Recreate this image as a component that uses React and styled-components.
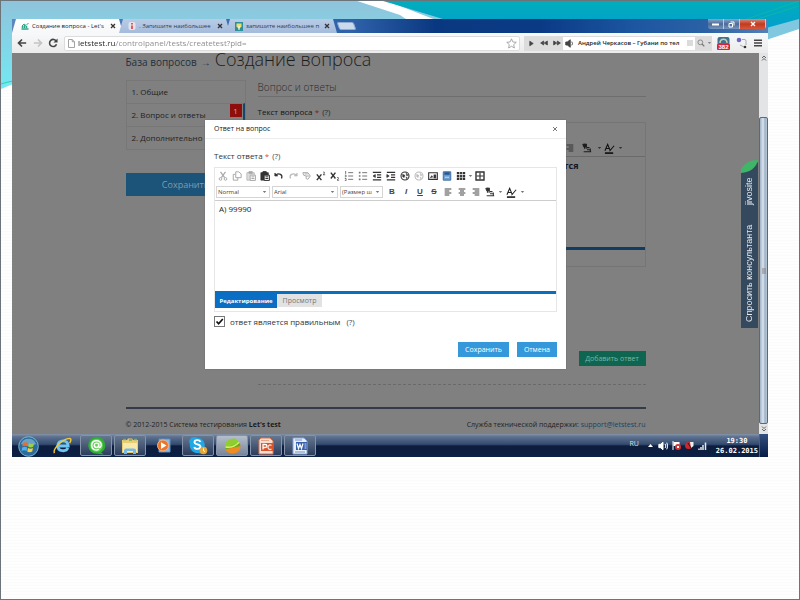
import React, { useState } from "react";
import styled, { createGlobalStyle, css } from "styled-components";

const Global = createGlobalStyle`
  * { box-sizing: border-box; }
  body { margin: 0; font-family: "Open Sans", sans-serif; font-size: 8px; color: #333; }
  button, input, select, textarea { font-family: inherit; margin: 0; }
  button { border: 0; padding: 0; background: none; color: inherit; cursor: pointer; }
  svg { display: block; flex: none; }
  a { text-decoration: none; }
`;

/* ---------- slide ---------- */
const Slide = styled.div`
  position: relative;
  min-height: 100vh;
  padding: 18px 31px 24px 11px;
  border: 1px solid #6b7478;
  overflow: hidden;
  background: repeating-linear-gradient(#fefefe 0 2px, #fbfbfb 2px 3px);
`;
const Waves = styled.svg`
  position: absolute;
  top: 0;
  left: 0;
  width: 100%;
  height: 100px;
`;
const Window = styled.section`
  position: relative;
  display: flex;
  flex-direction: column;
`;

/* ---------- browser chrome ---------- */
const TabStrip = styled.div`
  display: flex;
  height: 14px;
  background: linear-gradient(90deg, #5b86bf 0, #2e62a9 45%, #0a3880 56%, #0b3a85 70%, #1c56a0 82%, #2b62a6 92%, #567fb5);
`;
const Tab = styled.div`
  display: flex;
  align-items: center;
  gap: 3px;
  width: 111px;
  margin-right: -4px;
  padding: 0 7px 0 9px;
  font-size: 6px;
  font-weight: 500;
  line-height: 14px;
  color: ${(p) => (p.$active ? "#222" : "#2e3d55")};
  background: ${(p) => (p.$active ? "linear-gradient(#fff, #f6f7f8)" : "linear-gradient(#b9cce6, #a3bbdc)")};
  clip-path: polygon(4px 0, 107px 0, 100% 100%, 0 100%);
`;
const TabTitle = styled.span`
  flex: 1;
  white-space: nowrap;
`;
const IconButton = styled.button`
  display: grid;
  place-items: center;
  width: ${(p) => p.$w || 14}px;
  height: ${(p) => p.$h || 14}px;
  flex: none;
  color: ${(p) => p.$color || "#444"};
`;
const NewTab = styled.button`
  width: 17px;
  height: 8px;
  margin: 3px 0 0 5px;
  background: #cbd9ec;
  border: 1px solid #8eabd2;
  border-radius: 2px;
  transform: skewX(20deg);
`;
const Caption = styled.div`
  display: flex;
  align-self: flex-start;
  margin: 0 2px 0 auto;
  border-radius: 0 0 3px 3px;
  overflow: hidden;
`;
const CaptionButton = styled.button`
  display: grid;
  place-items: center;
  width: ${(p) => (p.$close ? 26 : 16)}px;
  height: 10px;
  border-right: 1px solid #b9c9df;
  background: ${(p) =>
    p.$close ? "linear-gradient(#dc8a7c, #c23a20 50%, #d4573c)" : "linear-gradient(#8aa4c6, #4b6c9b 50%, #7795bb)"};
`;
const Toolbar = styled.div`
  display: flex;
  align-items: center;
  height: 20px;
  padding: 0 0 0 2px;
  background: linear-gradient(#f8f9fa, #ebebec);
`;
const Omnibox = styled.label`
  display: flex;
  flex: 1;
  align-items: center;
  height: 15px;
  margin: 0 4px 0 3px;
  padding: 0 2px 0 2px;
  gap: 2px;
  background: #fff;
  border: 1px solid #dcdcdc;
  border-radius: 2px;
`;
const Address = styled.input`
  flex: 1;
  min-width: 0;
  padding: 0;
  border: 0;
  outline: 0;
  font-size: 8px;
  line-height: 12px;
  color: transparent;
  background: linear-gradient(90deg, #222 0 38px, #888 38px);
  background-clip: text;
`;
const Player = styled.div`
  display: flex;
  align-items: center;
  width: 188px;
  height: 15px;
  padding-left: 1px;
  background: #dcdcdd;
`;
const Track = styled.div`
  display: flex;
  flex: 1;
  align-items: center;
  gap: 4px;
  height: 13px;
  padding: 0 2px;
  background: #fff;
  white-space: nowrap;
  font-size: 6px;
  font-weight: 600;
  color: #222;
`;
const TrackName = styled.span`
  flex: 1;
`;

/* ---------- page ---------- */
const Viewport = styled.div`
  display: flex;
`;
const Page = styled.main`
  position: relative;
  flex: 1;
  min-width: 0;
  overflow: hidden;
  background: #808080;
`;
const Container = styled.div`
  max-width: 520px;
  margin: 0 auto;
`;
const Breadcrumb = styled.div`
  display: flex;
  align-items: baseline;
  gap: 4px;
  height: 27px;
  line-height: 12px;
  white-space: nowrap;
`;
const CrumbLink = styled.a`
  font-size: 10px;
  color: #23303c;
`;
const PageTitle = styled.h1`
  margin: 0;
  font-size: 18px;
  line-height: 12px;
  font-weight: 300;
  color: #1d1d1d;
`;
const Columns = styled.div`
  display: grid;
  grid-template-columns: 120px minmax(0, 1fr);
  column-gap: 12px;
`;
const StepList = styled.ul`
  margin: 0 0 23px;
  padding: 0;
  list-style: none;
  border: 1px solid #777;
`;
const Step = styled.li`
  position: relative;
  padding-left: 5px;
  font-size: 8px;
  line-height: 22px;
  color: #1f1f1f;
  border-right: ${(p) => (p.$current ? "2px solid #17456a" : "0")};
  & + & { border-top: 1px solid #777; }
`;
const Badge = styled.span`
  position: absolute;
  top: 0;
  right: 1px;
  width: 12px;
  height: 13px;
  font-size: 8px;
  line-height: 13px;
  text-align: center;
  color: #c9a9a9;
  background: #8e0d0d;
`;
const SaveWide = styled.button`
  width: 100%;
  height: 23px;
  font-size: 9px;
  color: #7e9cb0;
  background: #1c5379;
`;
const SectionTitle = styled.h2`
  margin: 0 0 8px;
  height: 17px;
  font-size: 10px;
  line-height: 15px;
  font-weight: 300;
  color: #2b2b2b;
  border-bottom: 1px solid #6e6e6e;
`;
const FieldLabel = styled.label`
  display: block;
  font-size: 8px;
  line-height: 14px;
  color: ${(p) => (p.$dim ? "#141414" : "#333")};
`;
const Star = styled.span`
  color: ${(p) => (p.$dim ? "#7c1d1d" : "#e04a3f")};
`;
const Help = styled.span`
  margin-left: 1px;
  color: ${(p) => (p.$dim ? "#1f2a33" : "#445")};
`;
const DimEditor = styled.div`
  height: 145px;
  margin-top: 3px;
  border: 1px solid #757575;
  display: flex;
  flex-direction: column;
`;
const DimTools = styled.div`
  display: flex;
  justify-content: flex-end;
  align-items: flex-end;
  height: 34px;
  padding: 0 21px 1px 0;
  border-bottom: 1px solid #6a6a6a;
`;
const DimText = styled.div`
  flex: 1;
  padding: 3px 66px 0 0;
  text-align: right;
  font-size: 9px;
  font-weight: 700;
  line-height: 12px;
  color: #15151f;
  border-bottom: 3px solid #0f3c60;
`;
const DimFoot = styled.div`
  height: 16px;
`;
const AddRow = styled.div`
  display: flex;
  justify-content: flex-end;
  padding: 84px 0 18px;
  border-bottom: 1px dashed #6a6a6a;
`;
const AddAnswer = styled.button`
  width: 67px;
  height: 15px;
  font-size: 7px;
  color: #7db5a5;
  background: #0f6650;
`;
const Footer = styled.footer`
  display: flex;
  justify-content: space-between;
  margin-top: 22px;
  padding: 9px 0 3px;
  border-top: 2px solid #333b48;
  font-size: 7px;
  line-height: 13px;
  color: #222;
  a { color: #174463; }
  b { color: #1a1a1a; }
`;

/* ---------- consultant tab ---------- */
const Consultant = styled.button`
  position: absolute;
  top: 107px;
  right: 1px;
  width: 17px;
  height: 168px;
  display: flex;
  flex-direction: column;
`;
const ConsultantBody = styled.span`
  display: flex;
  justify-content: space-between;
  flex: 1;
  width: 17px;
  padding: 6px 0 4px;
  writing-mode: vertical-rl;
  transform: rotate(180deg);
  font-family: "Liberation Sans", sans-serif;
  font-size: 9px;
  line-height: 17px;
  color: #e4e9ee;
  background: #34495e;
`;

/* ---------- scrollbar ---------- */
const Scroll = styled.div`
  display: flex;
  flex-direction: column;
  width: 9px;
  background: #e3e4e6;
`;
const Arrow = styled.div`
  display: grid;
  place-items: center;
  height: 10px;
`;
const Gap = styled.div`
  height: 54px;
`;
const Thumb = styled.div`
  display: grid;
  place-items: center;
  flex: 1;
  border: 1px solid #55697f;
  border-radius: 2px;
  background: linear-gradient(90deg, #9fb2c6, #dbe5ee 45%, #9db1c6 70%, #b7c7d6);
`;

/* ---------- modal ---------- */
const Backdrop = styled.div`
  position: absolute;
  inset: 0;
  display: flex;
  justify-content: center;
  align-items: flex-start;
  padding-top: 67px;
`;
const Dialog = styled.form`
  width: 361px;
  background: #fff;
  box-shadow: 0 0 1px #555;
`;
const DialogHead = styled.header`
  display: flex;
  justify-content: space-between;
  align-items: center;
  height: 19px;
  padding: 0 4px 0 9px;
  border-bottom: 1px solid #ededed;
`;
const DialogTitle = styled.h2`
  margin: 0;
  font-size: 7px;
  line-height: 18px;
  font-weight: 400;
  color: #222;
`;
const DialogBody = styled.div`
  padding: 10px 9px 12px;
`;
const Editor = styled.div`
  margin-top: 4px;
  border: 1px solid #e6e6e6;
`;
const Tools = styled.div`
  padding: 0 1px;
  border-bottom: 1px solid #ccc;
`;
const ToolRow = styled.div`
  display: flex;
  align-items: center;
  height: 16px;
`;
const PickWrap = styled.span`
  position: relative;
  width: ${(p) => p.$w}px;
  height: 12px;
  margin-right: 2px;
  svg { position: absolute; top: 4px; right: 3px; pointer-events: none; }
`;
const Pick = styled.select`
  display: block;
  width: 100%;
  height: 12px;
  padding: 0 5px 0 1px;
  appearance: none;
  border: 1px solid #d5d5d5;
  border-radius: 0;
  background: #fff;
  font-size: 6px;
  line-height: 10px;
  color: #444;
`;
const Letter = styled.span`
  font-family: "Liberation Sans", sans-serif;
  font-size: 8px;
  line-height: 12px;
  font-weight: 700;
  ${(p) => p.$kind === "i" && css`font-style: italic;`}
  ${(p) => p.$kind === "u" && css`text-decoration: underline;`}
  ${(p) => p.$kind === "s" && css`text-decoration: line-through;`}
`;
const AnswerText = styled.textarea`
  display: block;
  width: 100%;
  height: 90px;
  padding: 2px 4px;
  border: 0;
  outline: 0;
  resize: none;
  font-size: 8px;
  line-height: 12px;
  color: #222;
`;
const Modes = styled.div`
  display: flex;
  height: 20px;
  border-top: 3px solid #0a6ebd;
`;
const Mode = styled.button`
  height: ${(p) => (p.$active ? 14 : 13)}px;
  width: ${(p) => (p.$active ? 62 : 45)}px;
  font-size: ${(p) => (p.$active ? 6 : 7)}px;
  font-weight: ${(p) => (p.$active ? 700 : 400)};
  color: ${(p) => (p.$active ? "#fff" : "#777")};
  background: ${(p) => (p.$active ? "#0a6ec4" : "#e2e2e2")};
`;
const CheckRow = styled.label`
  display: flex;
  align-items: center;
  gap: 5px;
  margin-top: 3px;
  height: 13px;
  font-size: 8px;
  line-height: 13px;
`;
const Check = styled.input`
  appearance: none;
  width: 11px;
  height: 11px;
  border: 1px solid #777;
  background: #fff;
  &:checked {
    background: no-repeat center / 9px 9px
      url("data:image/svg+xml,%3Csvg xmlns='http://www.w3.org/2000/svg' viewBox='0 0 9 9'%3E%3Cpath d='M1.5 4.5 3.6 6.7 7.8 2' fill='none' stroke='%23111' stroke-width='1.7'/%3E%3C/svg%3E");
  }
`;
const Actions = styled.div`
  display: flex;
  justify-content: flex-end;
  gap: 8px;
  margin-top: 14px;
`;
const Action = styled.button`
  height: 15px;
  padding: 0 7px;
  font-size: 7px;
  line-height: 15px;
  color: #fff;
  background: #3498db;
`;

/* ---------- taskbar ---------- */
const Taskbar = styled.footer`
  display: flex;
  align-items: stretch;
  height: 23px;
  background: linear-gradient(#8494a9 0, #5d7190 12%, #334b6f 45%, #0d1d3d 52%, #0b2045);
`;
const TaskButton = styled.button`
  display: grid;
  place-items: center;
  width: 32px;
  margin: 1px 2px 1px 0;
  border-radius: 2px;
  border: 1px solid ${(p) => (p.$state ? "#8593a8" : "transparent")};
  background: ${(p) =>
    p.$state === "front"
      ? "linear-gradient(#b5bfcb, #77859b)"
      : p.$state
      ? "linear-gradient(#66788f, #2b3d5c)"
      : "none"};
`;
const Tray = styled.div`
  display: flex;
  align-items: center;
  gap: 4px;
  margin-left: auto;
  padding-right: 1px;
  color: #fff;
  font-size: 7px;
`;
const Lang = styled.span`
  padding-bottom: 4px;
  margin-right: 4px;
  color: #d6dce5;
`;
const Clock = styled.time`
  margin-left: 5px;
  font-family: "DejaVu Sans Mono", monospace;
  font-weight: 700;
  font-size: 7px;
  line-height: 10px;
  text-align: center;
`;
const ShowDesktop = styled.button`
  width: 9px;
  border-left: 1px solid #46608c;
  background: linear-gradient(#33507f, #061a45);
`;

/* ---------- icons ---------- */
const Ico = ({ s = 10, v = 12, children, ...rest }) => (
  <svg width={s} height={s} viewBox={`0 0 ${v} ${v}`} fill="none" stroke="currentColor" strokeWidth="1.2" aria-hidden="true" {...rest}>
    {children}
  </svg>
);
const Down = ({ color = "#777" }) => (
  <svg width="5" height="4" viewBox="0 0 5 4" aria-hidden="true"><path d="M.8 1h3.400L2.500 3z" fill={color} /></svg>
);
const Cross = ({ s = 6, c = "#333", w = 1.3 }) => (
  <svg width={s} height={s} viewBox="0 0 6 6" aria-hidden="true"><path d="M1 1l4 4M5 1 1 5" stroke={c} strokeWidth={w} /></svg>
);
const Paste = ({ dark }) => (
  <Ico>
    <path d="M1 2h9v9H1z" fill={dark ? "currentColor" : "#ddd"} strokeWidth=".8" />
    <path d="M3.500.8h4v2h-4z" fill="currentColor" />
    <path d="M5 5h6.300v6.300H5z" fill="#fff" /><path d="M6.500 7h3.500M6.500 9h3.500" />
  </Ico>
);
const Indent = ({ flip }) => (
  <Ico><path d="M1 1.500h10M1 10.500h10M6 4.500h5M6 7.500h5" strokeWidth="1.500" /><path d={flip ? "M1 4.200 3.800 6 1 7.800z" : "M4 4.200 1.200 6 4 7.800z"} fill="currentColor" strokeWidth=".8" /></Ico>
);
const Globe = () => (
  <Ico><circle cx="6" cy="6" r="4.800" strokeWidth="1.300" /><path d="M3 3.500 6 5l-1 3-2-1zM7 2l3 3-2 1zM7 7l2 1-1 2z" fill="currentColor" strokeWidth=".3" /></Ico>
);
const Direction = () => (
  <Ico><path d="M5 1v6M3 1v6" strokeWidth="1.400" /><path d="M1 1.500h4v3H2z" fill="currentColor" /><path d="M6 5.500h3M6 8h4M2 10.500h9M10 6.500v4" strokeWidth="1.300" /></Ico>
);
const TextColor = () => (
  <Ico s={11}><path d="M1 8.500 4 1.500l2.500 6M2 6h4M6 9l5-6" strokeWidth="1.200" /><path d="M1 11h9" strokeWidth="1.800" /></Ico>
);
const Align = ({ k }) => (
  <Ico s={8}>
    <path d={k === "l" ? "M1 1.500h10M1 4.500h7M1 7.500h10M1 10.500h7" : k === "c" ? "M1 1.500h10M3 4.500h6M1 7.500h10M3 10.500h6" : "M1 1.500h10M4 4.500h7M1 7.500h10M4 10.500h7"} strokeWidth="1.700" />
  </Ico>
);

const firstRow = [
  ["Вырезать", "#aaa", <Ico><path d="M3 1l5 7M9 1 4 8" strokeWidth="1.500" /><circle cx="3" cy="9.500" r="1.600" /><circle cx="9" cy="9.500" r="1.600" /></Ico>],
  ["Копировать", "#aaa", <Ico><path d="M4.500 1H8l3 2.500V8H4.500zM4 4H1.500v7H7V8" /></Ico>],
  ["Вставить", "#aaa", <Paste />],
  ["Вставить текст", "#333", <Paste dark />],
  ["Отменить", "#333", <Ico><path d="M2 5c4-3 9-1 7 4" strokeWidth="1.500" /><path d="M1 2.500v3.500h3.500z" fill="currentColor" strokeWidth=".8" /></Ico>],
  ["Повторить", "#bbb", <Ico><path d="M10 5C6 2 1 4 3 9" strokeWidth="1.500" /><path d="M11 2.500v3.500H7.500z" fill="currentColor" strokeWidth=".8" /></Ico>],
  ["Убрать форматирование", "#aaa", <Ico><path d="M1 2h6l3 4-3 4-2-1V6L2 5zM3 3.500h4M5 6h4" /></Ico>],
  ["Надстрочный", "#333", <Ico><path d="M1 4l5.500 7M6.500 4 1 11" strokeWidth="1.700" /><path d="M8.500 1.500c2-1 2.500 1 0 3H11" strokeWidth=".9" /></Ico>],
  ["Подстрочный", "#333", <Ico><path d="M1 2l5.500 7M6.500 2 1 9" strokeWidth="1.700" /><path d="M8.500 8c2-1 2.500 1 0 3H11" strokeWidth=".9" /></Ico>],
  ["Нумерованный список", "#777", <Ico><path d="M5 2h6M5 6h6M5 10h6M2 0v3.500M1 5h1.500v2H1M1 9h1.500v2.500H1" /></Ico>],
  ["Маркированный список", "#777", <Ico><path d="M5 2h6M5 6h6M5 10h6" /><path d="M1 2h2M1 6h2M1 10h2" strokeWidth="2" /></Ico>],
  ["Уменьшить отступ", "#333", <Indent />],
  ["Увеличить отступ", "#333", <Indent flip />],
  ["Ссылка", "#333", <Globe />],
  ["Убрать ссылку", "#bbb", <Globe />],
  ["Изображение", "#333", <Ico><path d="M.8 2h10.400v8H.8z" strokeWidth="1.300" /><path d="M2.500 8.500 4.500 5.500 6 7.500M7 4.500h2.500v4H7z" fill="currentColor" strokeWidth=".5" /></Ico>],
  ["Видео", "#3c6fa8", <Ico><path d="M1.500 1h9v10h-9z" fill="#6d9fd2" /><path d="M3 1.500h6v3H3z" fill="#2d5484" strokeWidth=".7" /><path d="M4 7.500h1.500M6.500 7.500H8" stroke="#fff" /></Ico>],
  ["Таблица", "#333", <Ico><path d="M1 2.500h10M1 6h10M1 9.500h10" strokeWidth="2.700" /><path d="M4.300 0v12M7.700 0v12" stroke="#fff" strokeWidth=".8" /></Ico>],
];
const lastIcon = <Ico><path d="M1.200 1.200h9.600v9.600H1.200z" strokeWidth="1.700" /><path d="M6 2v8M2 6h8" strokeWidth="1.400" /></Ico>;

const tasks = [
  ["Internet Explorer", "", <svg width="19" height="19" viewBox="0 0 20 20"><path d="M5 10.500h11c0-7-11-7.500-11 0 0 6 9 6.500 10.500 2" fill="none" stroke="#6fc4f2" strokeWidth="3" /><path d="M1.500 18c-2-4 8-15 16-15.500 2 0 1.500 3 0 5" fill="none" stroke="#f2c93c" strokeWidth="1.500" /></svg>],
  ["Агент", "on", <svg width="19" height="19" viewBox="0 0 20 20"><path d="M10 .8a9 9 0 0 1 5 16.600l2.500 2-7-.6A9 9 0 0 1 10 .8z" fill="#2fae35" /><circle cx="10" cy="9.800" r="6.800" fill="#66cf5b" /><circle cx="10" cy="9.800" r="2.300" fill="none" stroke="#fff" strokeWidth="1.500" /><path d="M12.300 7v4c.5 2 2.700 1 2.700-1.500 0-6-10-6-10 .3 0 5 5 6 7.500 4" fill="none" stroke="#fff" strokeWidth="1.400" /></svg>],
  ["Проводник", "on", <svg width="20" height="18" viewBox="0 0 20 18"><path d="M2 3h5l1-1.500h4L13 3h5v13H2z" fill="#e9cd72" /><path d="M3 6h14v9H3z" fill="#f8e9a8" /><path d="M3 2.500h3M9 3h3M14 2.500h3" stroke="#68b06b" strokeWidth="1.500" /><path d="M4 17v-3.500q0-2 2-2h8q2 0 2 2V17h-3v-3H7v3z" fill="#76b9e4" /></svg>],
  ["Проигрыватель", "", <svg width="16" height="16" viewBox="0 0 16 16"><path d="M3 1h11v13H3z" fill="#8fb9df" stroke="#5f8fc2" /><circle cx="7" cy="7.500" r="5.500" fill="#e8762c" stroke="#f6b27d" /><path d="M5 4.200 10.500 7.500 5 11z" fill="#fff" /></svg>],
  ["Skype", "on", <svg width="20" height="19" viewBox="0 0 20 19"><path d="M6 1a5 5 0 0 1 3 .7A7.500 7.500 0 0 1 16.500 11 4.800 4.800 0 0 1 10 17 7.500 7.500 0 0 1 2 8 4.600 4.600 0 0 1 6 1z" fill="#20a8e6" /><path d="M12.500 6c-1-2.500-6-2.500-6 .2s6 1.800 6 4.500-5.500 3-6.200.3" fill="none" stroke="#fff" strokeWidth="1.900" /><circle cx="15.500" cy="14.500" r="3.800" fill="#e6a73a" /><path d="M15.500 12.500v2.300l1.500.8" stroke="#fff" fill="none" /></svg>],
  ["Браузер", "front", <svg width="19" height="18" viewBox="0 0 20 18"><path d="M2 12C1 5 6 1 12 1c3 1 5 4 6 7z" fill="#8fce2e" /><path d="M2 12 17 5l1.500 4L6 16z" fill="#5fae1c" /><path d="M2.500 12.500 18.500 9c0 5-4 8-9 8-3 0-6-2-7-4.500z" fill="#f08a24" /><path d="M3 10c5 1 10-1 14-5" stroke="#d7ef6a" strokeWidth="1.500" fill="none" /></svg>],
  ["PowerPoint", "on", <svg width="18" height="18" viewBox="0 0 18 18"><path d="M4 1h9l3 3v13H2V3z" fill="#f7ded2" stroke="#d77452" /><path d="M4 3.500h8" stroke="#e7a78c" /><path d="M4 6h12v8H4z" fill="#d9532c" /><path d="M6 12.500v-5h2q2 0 2 1.500t-2 1.500H6" stroke="#fff" strokeWidth="1.300" fill="none" /><path d="M14.500 8.500A2.200 2.200 0 1 0 14.500 12" stroke="#fbe3d8" strokeWidth="1.200" fill="none" /></svg>],
  ["Word", "on", <svg width="18" height="18" viewBox="0 0 18 18"><path d="M2 1h11l3 3v13H2z" fill="#e8effa" stroke="#88a5d4" /><path d="M4 3h7M4 15h10" stroke="#6f90c6" /><path d="M5 5h11v8H5z" fill="#3561ae" /><path d="M6 6.500 7.500 11.500l1.500-4 1.500 4L12 6.500" stroke="#fff" fill="none" strokeWidth="1.200" /><path d="M13.500 7h2M13.500 9h2M13.500 11h2" stroke="#c9d8ef" /></svg>],
];

function EditorTools() {
  return (
    <Tools>
      <ToolRow>
        {firstRow.map(([name, color, icon]) => (
          <IconButton type="button" key={name} aria-label={name} $color={color}>{icon}</IconButton>
        ))}
        <IconButton type="button" aria-label="Размер таблицы" $w={5}><Down /></IconButton>
        <IconButton type="button" aria-label="На весь экран" $color="#333" $w={14}>{lastIcon}</IconButton>
      </ToolRow>
      <ToolRow>
        {[["Normal", 54], ["Arial", 66], ["(Размер ш", 43]].map(([label, w]) => (
          <PickWrap key={label} $w={w}>
            <Pick aria-label={label}><option>{label}</option></Pick>
            <Down />
          </PickWrap>
        ))}
        {[["B", "b"], ["I", "i"], ["U", "u"], ["S", "s"]].map(([l, k]) => (
          <IconButton type="button" key={l}><Letter $kind={k}>{l}</Letter></IconButton>
        ))}
        {["l", "c", "r"].map((k) => (
          <IconButton type="button" key={k} aria-label="Выравнивание"><Align k={k} /></IconButton>
        ))}
        <IconButton type="button" aria-label="Направление" $color="#333"><Direction /></IconButton>
        <IconButton type="button" aria-label="Ещё" $w={6}><Down /></IconButton>
        <IconButton type="button" aria-label="Цвет" $color="#222" $w={16}><TextColor /></IconButton>
        <IconButton type="button" aria-label="Цвета" $w={6}><Down /></IconButton>
      </ToolRow>
    </Tools>
  );
}

function AnswerDialog() {
  const [text, setText] = useState("А) 99990");
  const [right, setRight] = useState(true);
  return (
    <Backdrop>
      <Dialog onSubmit={(e) => e.preventDefault()}>
        <DialogHead>
          <DialogTitle>Ответ на вопрос</DialogTitle>
          <IconButton type="button" aria-label="Закрыть"><Cross c="#777" w={1} /></IconButton>
        </DialogHead>
        <DialogBody>
          <FieldLabel htmlFor="answer">Текст ответа <Star>*</Star> <Help>(?)</Help></FieldLabel>
          <Editor>
            <EditorTools />
            <AnswerText id="answer" spellCheck={false} value={text} onChange={(e) => setText(e.target.value)} />
            <Modes>
              <Mode type="button" $active>Редактирование</Mode>
              <Mode type="button">Просмотр</Mode>
            </Modes>
          </Editor>
          <CheckRow>
            <Check type="checkbox" checked={right} onChange={(e) => setRight(e.target.checked)} />
            <span>ответ является правильным</span>
            <Help>(?)</Help>
          </CheckRow>
          <Actions>
            <Action type="submit">Сохранить</Action>
            <Action type="button">Отмена</Action>
          </Actions>
        </DialogBody>
      </Dialog>
    </Backdrop>
  );
}

function BrowserChrome() {
  const [url, setUrl] = useState("letstest.ru/controlpanel/tests/createtest?pid=");
  return (
    <>
      <TabStrip>
        <Tab $active>
          <svg width="8" height="8" viewBox="0 0 8 8"><path d="M.5 7h7M1.500 6V4M3.500 6V3M5.500 6V4" stroke="#2aa58a" strokeWidth="1.500" /><path d="M1 4l2-2 2 1.500L7.500 1" stroke="#2aa58a" fill="none" /></svg>
          <TabTitle>Создание вопроса - Let's</TabTitle><Cross />
        </Tab>
        <Tab>
          <svg width="8" height="8" viewBox="0 0 8 8"><rect x=".5" width="7" height="8" rx="2" fill="#e8e3ea" /><path d="M4 1v1.500M4 3.500V7" stroke="#c33" strokeWidth="1.500" /></svg>
          <TabTitle>. Запишите наибольшее</TabTitle><Cross />
        </Tab>
        <Tab>
          <svg width="8" height="9" viewBox="0 0 8 9"><path d="M0 0h8v9H0z" fill="#2e8f9c" /><path d="M1.500 1.500h5v3L4 7 1.500 4.500z" fill="#e9e26a" /><path d="M4 4v4" stroke="#fff" /></svg>
          <TabTitle>запишите наибольшее п</TabTitle><Cross />
        </Tab>
        <NewTab aria-label="Новая вкладка" />
        <Caption>
          <CaptionButton aria-label="Свернуть"><svg width="7" height="4"><path d="M0 2.500h7" stroke="#fff" strokeWidth="2" /></svg></CaptionButton>
          <CaptionButton aria-label="Развернуть"><svg width="7" height="7" viewBox="0 0 7 7"><path d="M1 2.500h3.500V6H1zM2.500 1H6v3.500" stroke="#fff" fill="none" /></svg></CaptionButton>
          <CaptionButton $close aria-label="Закрыть окно"><Cross c="#fff" /></CaptionButton>
        </Caption>
      </TabStrip>
      <Toolbar>
        <IconButton aria-label="Назад" $w={16}><Ico><path d="M11 6H2M6 1.800 1.800 6 6 10.200" strokeWidth="2" /></Ico></IconButton>
        <IconButton aria-label="Вперёд" $w={15} $color="#c4c4c4"><Ico><path d="M1 6h9M6 1.800 10.200 6 6 10.200" strokeWidth="2" /></Ico></IconButton>
        <IconButton aria-label="Обновить" $w={16}><Ico><path d="M10 4A4.300 4.300 0 1 0 10.200 7.500" strokeWidth="1.900" /><path d="M11.500.5v5h-5z" fill="currentColor" stroke="none" /></Ico></IconButton>
        <Omnibox>
          <Ico s={9} color="#999"><path d="M2 .7h5l3 3v7.600H2zM7 .7v3h3" /></Ico>
          <Address aria-label="Адрес" value={url} spellCheck={false} onChange={(e) => setUrl(e.target.value)} />
          <Ico s={11} color="#999"><path d="M6 .9l1.500 3.400 3.700.4-2.800 2.500.8 3.700L6 9l-3.200 1.900.8-3.700L.8 4.700l3.700-.4z" strokeWidth=".9" /></Ico>
        </Omnibox>
        <Player>
          <IconButton aria-label="Играть" $w={13}><Ico s={7}><path d="M3 2l6 4-6 4z" fill="currentColor" /></Ico></IconButton>
          <IconButton aria-label="Предыдущий" $w={12}><Ico s={8}><path d="M5.500 3v6L1 6zM11 3v6L6.500 6z" fill="currentColor" /></Ico></IconButton>
          <IconButton aria-label="Следующий" $w={13}><Ico s={8}><path d="M6.500 3v6L11 6zM1 3v6l4.500-3z" fill="currentColor" /></Ico></IconButton>
          <Track>
            <Ico s={9} color="#444"><path d="M1 4h2l4-3v10L3 8H1z" fill="currentColor" /><path d="M9 3.500q2 2.500 0 5" /></Ico>
            <TrackName>Андрей Черкасов – Губани по тел</TrackName>
            <Ico s={6} color="#888"><path d="M0 2h12M0 6h12M0 10h12" /></Ico>
          </Track>
          <IconButton aria-label="Поиск" $w={11} $color="#777"><Ico s={8}><circle cx="5" cy="5" r="3.600" /><path d="M7.500 7.500 11 11" strokeWidth="1.800" /></Ico></IconButton>
          <IconButton aria-label="Меню поиска" $w={6}><Down color="#888" /></IconButton>
        </Player>
        <IconButton aria-label="Расширение 382" $w={22}>
          <svg width="13" height="14" viewBox="0 0 13 14"><rect x=".5" y="1" width="12" height="10" rx="2" fill="#3d7196" /><path d="M3 7c0-5 7-5 7 0" fill="none" stroke="#c5cfa7" strokeWidth="1.500" /><rect y="8" width="13" height="6" rx="1" fill="#cf2442" /><text x="6.500" y="13" textAnchor="middle" fontSize="6" fontWeight="700" fontFamily="Liberation Sans" fill="#fff" stroke="none">382</text></svg>
        </IconButton>
        <IconButton aria-label="Закладки" $w={14}>
          <svg width="11" height="12" viewBox="0 0 11 12"><circle cx="3" cy="3" r="2.300" fill="#7069c4" /><path d="M6 2.500h3q1 0 1 2V8M4 8l4 2" stroke="#aaa" fill="none" /><circle cx="9" cy="10" r="1.300" fill="#333" /></svg>
        </IconButton>
        <IconButton aria-label="Меню" $w={20}><Ico s={8}><path d="M0 2h12M0 6h12M0 10h12" strokeWidth="2.300" /></Ico></IconButton>
      </Toolbar>
    </>
  );
}

export default function App() {
  return (
    <Slide>
      <Global />
      <Waves viewBox="0 0 800 100" preserveAspectRatio="none" aria-hidden="true">
        <defs>
          <linearGradient id="sky" x1="0" y1="0" x2="0" y2="1"><stop offset="0" stopColor="#8fc4db" /><stop offset="1" stopColor="#74e8f4" /></linearGradient>
          <linearGradient id="teal" x1="0" y1="0" x2="0" y2="1"><stop offset="0" stopColor="#02adbb" /><stop offset="1" stopColor="#02a0cd" /></linearGradient>
        </defs>
        <path d="M0 0h450v60H12v23L0 88z" fill="url(#sky)" />
        <path d="M0 83q6-2 12-3" stroke="#22d6b0" fill="none" />
        <path d="M357 0h30l62 24h-34L400 14z" fill="#fff" />
        <path d="M700 0v39h67l33-11V0z" fill="#7fc8e0" />
        <path d="M383 0 400 5 443 18 450 24h317v3l33-9V0z" fill="url(#teal)" />
        <path d="M745 19l55-19M755 19l45-14" stroke="#10bba4" strokeWidth=".7" />
      </Waves>
      <Window>
        <BrowserChrome />
        <Viewport>
          <Page>
            <Container>
              <Breadcrumb>
                <CrumbLink href="#">База вопросов</CrumbLink><CrumbLink as="span">→</CrumbLink>
                <PageTitle>Создание вопроса</PageTitle>
              </Breadcrumb>
              <Columns>
                <aside>
                  <StepList>
                    <Step>1. Общие</Step>
                    <Step $current>2. Вопрос и ответы<Badge>1</Badge></Step>
                    <Step>2. Дополнительно</Step>
                  </StepList>
                  <SaveWide>Сохранить</SaveWide>
                </aside>
                <section>
                  <SectionTitle>Вопрос и ответы</SectionTitle>
                  <FieldLabel as="div" $dim>Текст вопроса <Star $dim>*</Star> <Help $dim>(?)</Help></FieldLabel>
                  <DimEditor>
                    <DimTools>
                      <IconButton aria-label="По правому краю" $color="#333"><Align k="r" /></IconButton>
                      <IconButton aria-label="Направление" $color="#1c1c1c" $w={20}><Direction /></IconButton>
                      <IconButton aria-label="Ещё" $w={4}><Down color="#333" /></IconButton>
                      <IconButton aria-label="Цвет" $color="#111" $w={17}><TextColor /></IconButton>
                      <IconButton aria-label="Цвета" $w={6}><Down color="#333" /></IconButton>
                    </DimTools>
                    <DimText>тся</DimText>
                    <DimFoot />
                  </DimEditor>
                  <AddRow><AddAnswer>Добавить ответ</AddAnswer></AddRow>
                </section>
              </Columns>
              <Footer>
                <span>© 2012-2015 Система тестирования <b>Let's test</b></span>
                <span>Служба технической поддержки: <a href="mailto:support@letstest.ru">support@letstest.ru</a></span>
              </Footer>
            </Container>
            <AnswerDialog />
            <Consultant>
              <svg width="17" height="13" viewBox="0 0 17 13"><path d="M0 13 17 2v11z" fill="#34495e" /><path d="M0 13V9Q5 0 17 0 14 12 0 13z" fill="#3fb567" /></svg>
              <ConsultantBody><span>Спросить консультанта</span><span>jivosite</span></ConsultantBody>
            </Consultant>
          </Page>
          <Scroll>
            <Arrow><Ico s={6} color="#555"><path d="M2 6l4-4 4 4M2 11l4-4 4 4" strokeWidth="1.800" /></Ico></Arrow>
            <Gap />
            <Thumb><svg width="4" height="6"><path d="M0 1h4M0 3h4M0 5h4" stroke="#8a7f78" /></svg></Thumb>
            <Arrow><Ico s={6} color="#555"><path d="M2 1l4 4 4-4M2 6l4 4 4-4" strokeWidth="1.800" /></Ico></Arrow>
          </Scroll>
        </Viewport>
        <Taskbar>
          <TaskButton aria-label="Пуск">
            <svg width="21" height="21" viewBox="0 0 21 21"><circle cx="10.500" cy="10.500" r="9.800" fill="#2c6c9c" stroke="#7fb4d3" /><path d="M3 8a8 8 0 0 1 15 0q-7 4-15 0z" fill="#6ba2c4" /><path d="M5 7q2.500-1.500 5 0l-.7 3.500q-2.300-1.500-5 0z" fill="#ee6b2d" /><path d="M11 7.300q2.500 1.500 5 0l-.8 3.500q-2.500 1.500-5 0z" fill="#9bd04a" /><path d="M4.200 11.500q2.500-1.500 5 0L8.500 15q-2.500-1.500-5 0z" fill="#4fb0ea" /><path d="M10 12q2.500 1.500 5 0l-.8 3.500q-2.500 1.500-5 0z" fill="#f8cf3d" /></svg>
          </TaskButton>
          {tasks.map(([name, state, icon]) => (
            <TaskButton key={name} aria-label={name} $state={state}>{icon}</TaskButton>
          ))}
          <Tray>
            <Lang>RU</Lang>
            <svg width="7" height="5"><path d="M1 4l2.500-3L6 4z" fill="#fff" /></svg>
            <Ico s={10}><path d="M1 4h2l3-2.500v9L3 8H1z" fill="currentColor" /><path d="M8.500 3.500q2 2.500 0 5M10.500 2q2.500 4 0 8" /></Ico>
            <svg width="9" height="9" viewBox="0 0 9 9"><path d="M1 0v9" stroke="#fff" /><path d="M1.500 1h6v4h-6z" fill="#fff" /><circle cx="6" cy="6" r="3" fill="#d63232" /><path d="M5 5l2 2M7 5 5 7" stroke="#fff" /></svg>
            <svg width="9" height="9" viewBox="0 0 9 9"><circle cx="3.500" cy="4.500" r="3.500" fill="#d3242a" /><path d="M5 1h3.500v4L6 7z" fill="#eee" /><path d="M3 2l3 5" stroke="#222" /></svg>
            <svg width="9" height="8" viewBox="0 0 9 8"><path d="M1 8V6.500M3 8V5M5 8V3M7.500 8V.5" stroke="#e6eaf0" strokeWidth="1.500" /></svg>
            <Clock>19:30<br />26.02.2015</Clock>
          </Tray>
          <ShowDesktop aria-label="Показать рабочий стол" />
        </Taskbar>
      </Window>
    </Slide>
  );
}
